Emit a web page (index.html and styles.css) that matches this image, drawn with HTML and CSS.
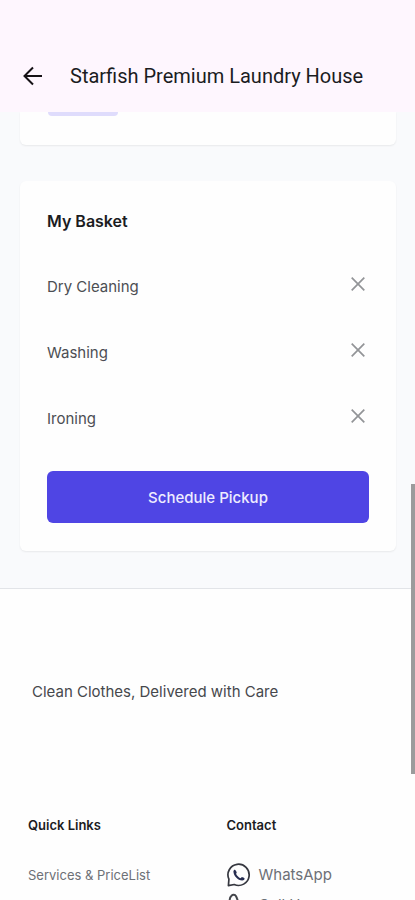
FILE: index.html
```html
<!DOCTYPE html>
<html lang="en">
<head>
    <meta charset="UTF-8">
    <meta name="viewport" content="width=device-width, initial-scale=1.0">
    <title>Starfish Premium Laundry House</title>
    <link rel="stylesheet" href="styles.css">
</head>
<body>
    <!-- App bar -->
    <header class="app-bar">
        <button class="icon-button" type="button" aria-label="Back">
            <svg width="20" height="20" viewBox="0 0 20 20" fill="none" stroke="#161216" stroke-width="2">
                <path d="M19 10H2M10 1.5L1.5 10L10 18.5"/>
            </svg>
        </button>
        <h1>Starfish Premium Laundry House</h1>
    </header>

    <div class="page">
        <main>
            <section class="card services-card">
                <div class="service-tag"></div>
            </section>

            <section class="card basket">
                <h2>My Basket</h2>
                <ul>
                    <li>
                        <span>Dry Cleaning</span>
                        <button class="icon-button" type="button" aria-label="Remove Dry Cleaning">
                            <svg width="14" height="14" viewBox="0 0 14 14" stroke="#929497" stroke-width="1.7"><path d="M.7 .7L13.3 13.3M13.3 .7L.7 13.3"/></svg>
                        </button>
                    </li>
                    <li>
                        <span>Washing</span>
                        <button class="icon-button" type="button" aria-label="Remove Washing">
                            <svg width="14" height="14" viewBox="0 0 14 14" stroke="#929497" stroke-width="1.7"><path d="M.7 .7L13.3 13.3M13.3 .7L.7 13.3"/></svg>
                        </button>
                    </li>
                    <li>
                        <span>Ironing</span>
                        <button class="icon-button" type="button" aria-label="Remove Ironing">
                            <svg width="14" height="14" viewBox="0 0 14 14" stroke="#929497" stroke-width="1.7"><path d="M.7 .7L13.3 13.3M13.3 .7L.7 13.3"/></svg>
                        </button>
                    </li>
                </ul>
                <button class="pickup-button" type="button">Schedule Pickup</button>
            </section>
        </main>

        <footer>
            <p class="tagline">Clean Clothes, Delivered with Care</p>
            <div class="footer-columns">
                <nav>
                    <h3>Quick Links</h3>
                    <a href="#services">Services &amp; PriceList</a>
                </nav>
                <div class="contact">
                    <h3>Contact</h3>
                    <a href="#whatsapp">
                        <svg width="24" height="24" viewBox="0 0 24 24">
                            <path d="M1.4 22.6L1.9 16.2A10.6 10.6 0 1 1 7.2 21.5Z" fill="none" stroke="#35373f" stroke-width="1.7" stroke-linejoin="round"/>
                            <path d="M8.2 7C7.5 6.500 6.600 7.200 6.400 8.400C6.500 12.600 10.800 17.300 15.200 17.500C16.600 17.500 17.700 16.500 17.600 15.500C17.400 14.900 15.500 14 14.900 14L13.500 15.200C11.500 14.400 9.900 12.700 9.100 10.800L9.700 9.700C9.700 9.100 8.800 7.400 8.200 7Z" fill="#262d50"/>
                        </svg>
                        WhatsApp
                    </a>
                    <a href="#call">
                        <svg width="24" height="24" viewBox="0 0 24 24" fill="none" stroke="#44464c" stroke-width="2" stroke-linejoin="round">
                            <path d="M9 3.200C8 1.500 5.800 1.500 4.500 2.700C2.800 4.200 2.400 6.200 3 8.500C5 15 9.500 19.500 16 21.300C18.200 21.800 20 21.200 21.300 19.700C22.400 18.400 22.200 16.600 20.800 15.700L18.500 14.300C17.200 13.500 16 13.700 15 14.700L14 15.700C11.700 14.500 9.700 12.500 8.500 10.200L9.500 9.200C10.500 8.200 10.700 6.800 10 5.500Z"/>
                        </svg>
                        Call Us
                    </a>
                </div>
            </div>
        </footer>
    </div>

    <div class="scroll-thumb"></div>
</body>
</html>
```
FILE: styles.css
```css
/* Overall layout */
* {
    box-sizing: border-box;
}

body {
    display: flex;
    flex-direction: column;
    margin: 0;
    height: 100vh;
    overflow: hidden;
    position: relative;
    font-family: Inter, sans-serif;
    background: #fefefe;
    color: #1b1c1f;
}

h1, h2, h3, p, ul {
    margin: 0;
    padding: 0;
}

button {
    border: 0;
    padding: 0;
    font-family: inherit;
    cursor: pointer;
}

svg {
    display: block;
    flex: none;
}

.icon-button {
    display: flex;
    background: transparent;
}

/* App bar, with room for the status bar */
.app-bar {
    display: flex;
    align-items: center;
    flex: none;
    gap: 27px;
    padding: 60px 23px 20px;
    background: #fef6fe;
}

h1 {
    font-family: Roboto, sans-serif;
    font-size: 20px;
    font-weight: 400;
    line-height: 32px;
    white-space: nowrap;
}

.page {
    flex: 1;
    overflow: hidden;
}

main {
    padding: 0 19px 37px 20px;
    background: #f9fafc;
}

/* Cards */
.card {
    background: #fefefe;
    border-radius: 6px;
    box-shadow: 0 1px 2px rgba(0, 0, 0, 0.07);
}

.services-card {
    margin-bottom: 36px;
    padding: 0 28px 29px;
    border-radius: 0 0 6px 6px;
}

.service-tag {
    width: 70px;
    height: 4px;
    border-radius: 0 0 6px 6px;
    background: #dfdcfc;
}

.basket {
    padding: 28px 27px;
}

h2 {
    margin-bottom: 32px;
    font-size: 16px;
    font-weight: 600;
    line-height: 24px;
}

ul {
    margin-bottom: 8px;
    list-style: none;
}

li {
    display: flex;
    justify-content: space-between;
    padding: 10px 4px 32px 0;
    font-size: 15px;
    line-height: 24px;
    color: #4c4e53;
}

li .icon-button {
    align-self: flex-start;
    padding-top: 2px;
}

.pickup-button {
    width: 100%;
    height: 52px;
    border-radius: 6px;
    background: #4f45e4;
    color: #eeecff;
    font-size: 15px;
    font-weight: 500;
}

/* Footer */
footer {
    padding: 91px 28px 0;
    border-top: 1px solid #e2e4e8;
}

.tagline {
    padding: 0 4px;
    font-size: 15px;
    line-height: 24px;
    color: #46484c;
}

.footer-columns {
    display: grid;
    grid-template-columns: 1fr 1fr;
    gap: 38px;
    margin-top: 109px;
}

h3 {
    margin-bottom: 26px;
    font-size: 13px;
    font-weight: 600;
    line-height: 24px;
}

a {
    display: flex;
    align-items: center;
    gap: 8px;
    font-size: 13px;
    line-height: 24px;
    color: #6d7076;
    text-decoration: none;
    white-space: nowrap;
}

.contact a {
    margin-bottom: 6px;
    font-size: 15px;
}

/* Scroll position marker over the page edge */
.scroll-thumb {
    position: absolute;
    top: 484px;
    right: 0;
    width: 4px;
    height: 290px;
    background: #9b9b9c;
}
```
